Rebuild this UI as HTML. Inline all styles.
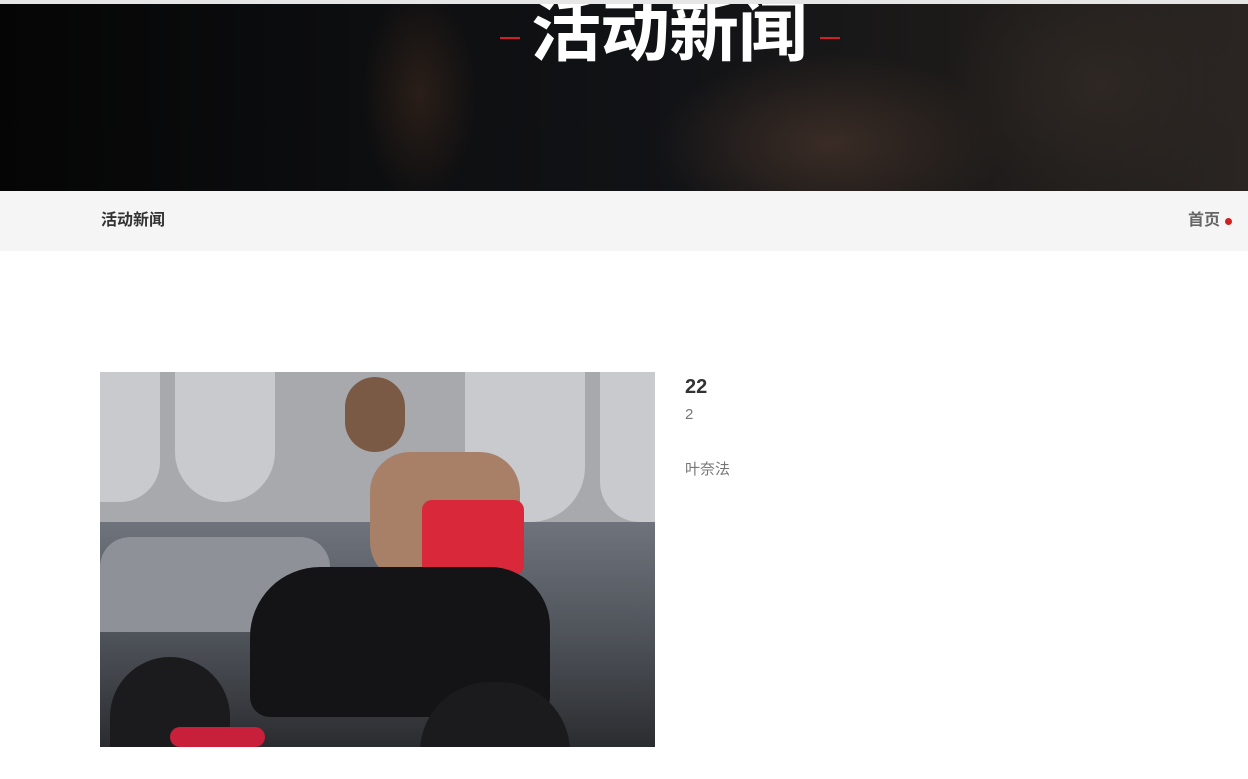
<!DOCTYPE html>
<html><head><meta charset="utf-8"><style>
body{margin:0;width:1248px;height:779px;overflow:hidden;background:#fff;font-family:"Liberation Sans","Noto Sans CJK SC",sans-serif;position:relative}
.top{position:absolute;left:0;top:0;width:1248px;height:4px;background:#e6e6e6}
.hero{position:absolute;left:0;top:4px;width:1248px;height:187px;overflow:hidden;background:linear-gradient(90deg,#050505 0%,#0d0e10 30%,#121316 55%,#1c1a19 75%,#2a2522 100%)}
.hero .b1{position:absolute;left:360px;top:-20px;width:120px;height:220px;background:radial-gradient(ellipse at center,#2a1e18 0%,rgba(0,0,0,0) 70%)}
.hero .b2{position:absolute;left:640px;top:40px;width:380px;height:200px;background:radial-gradient(ellipse at center,#3a2c25 0%,rgba(0,0,0,0) 65%)}
.hero .b3{position:absolute;left:950px;top:-40px;width:300px;height:240px;background:radial-gradient(ellipse at center,#2e2723 0%,rgba(0,0,0,0) 70%)}
.title{position:absolute;left:531px;top:-28px;white-space:nowrap;color:#fff;font-weight:bold;font-size:70px;line-height:100px;font-family:"Noto Sans CJK SC",sans-serif;letter-spacing:-1px}
.dash{position:absolute;top:33px;width:20px;height:2px;background:#d21f1f}
.bar{position:absolute;left:0;top:191px;width:1248px;height:60px;background:#f5f5f5}
.bar .l{position:absolute;left:101px;top:21px;font-size:16px;line-height:18px;font-weight:bold;color:#333}
.bar .r{position:absolute;left:1188px;top:21px;font-size:16px;line-height:18px;font-weight:bold;color:#666}
.dot{position:absolute;left:1225px;top:27px;width:7px;height:7px;border-radius:50%;background:#d21f1f}
.img{position:absolute;left:100px;top:372px;width:555px;height:375px;overflow:hidden;background:#8a8c92}
.img div{position:absolute}
.h{font-size:20px;font-weight:bold;color:#333;position:absolute;left:685px;top:376px}
.s{font-size:15px;color:#777;position:absolute;left:685px;top:406px}
.a{font-size:15px;color:#777;position:absolute;left:685px;top:458px}
</style></head><body>
<div class="top"></div>
<div class="hero"><div class="b1"></div><div class="b2"></div><div class="b3"></div>
<div class="title">活动新闻</div>
<div class="dash" style="left:500px"></div><div class="dash" style="left:820px"></div>
</div>
<div class="bar"><div class="l">活动新闻</div><div class="r">首页</div><div class="dot"></div></div>
<div class="img">
<div style="left:0;top:0;width:555px;height:150px;background:#a8a9ad"></div>
<div style="left:0;top:0;width:60px;height:130px;background:#c9cacd;border-radius:0 0 40px 0"></div>
<div style="left:75px;top:0;width:100px;height:130px;background:#c9cacd;border-radius:0 0 50px 50px"></div>
<div style="left:365px;top:0;width:120px;height:150px;background:#c9cacd;border-radius:0 0 55px 55px"></div>
<div style="left:500px;top:0;width:55px;height:150px;background:#c9cacd;border-radius:0 0 0 40px"></div>
<div style="left:0;top:150px;width:555px;height:225px;background:linear-gradient(180deg,#6f737b 0%,#4f535a 50%,#2b2c30 100%)"></div>
<div style="left:0;top:165px;width:230px;height:95px;background:#8e9298;border-radius:30px 30px 0 0"></div>
<div style="left:245px;top:5px;width:60px;height:75px;background:#7a5a44;border-radius:30px"></div>
<div style="left:270px;top:80px;width:150px;height:130px;background:#a88068;border-radius:40px"></div>
<div style="left:322px;top:128px;width:102px;height:75px;background:#d8283a;border-radius:10px"></div>
<div style="left:150px;top:195px;width:300px;height:150px;background:#141416;border-radius:70px 60px 20px 20px"></div>
<div style="left:10px;top:285px;width:120px;height:90px;background:#1b1b1d;border-radius:60px 60px 0 0"></div>
<div style="left:320px;top:310px;width:150px;height:70px;background:#1b1b1d;border-radius:75px 75px 0 0"></div>
<div style="left:70px;top:355px;width:95px;height:20px;background:#c8203a;border-radius:10px"></div>
</div>
<div class="h">22</div>
<div class="s">2</div>
<div class="a">叶奈法</div>
</body></html>
